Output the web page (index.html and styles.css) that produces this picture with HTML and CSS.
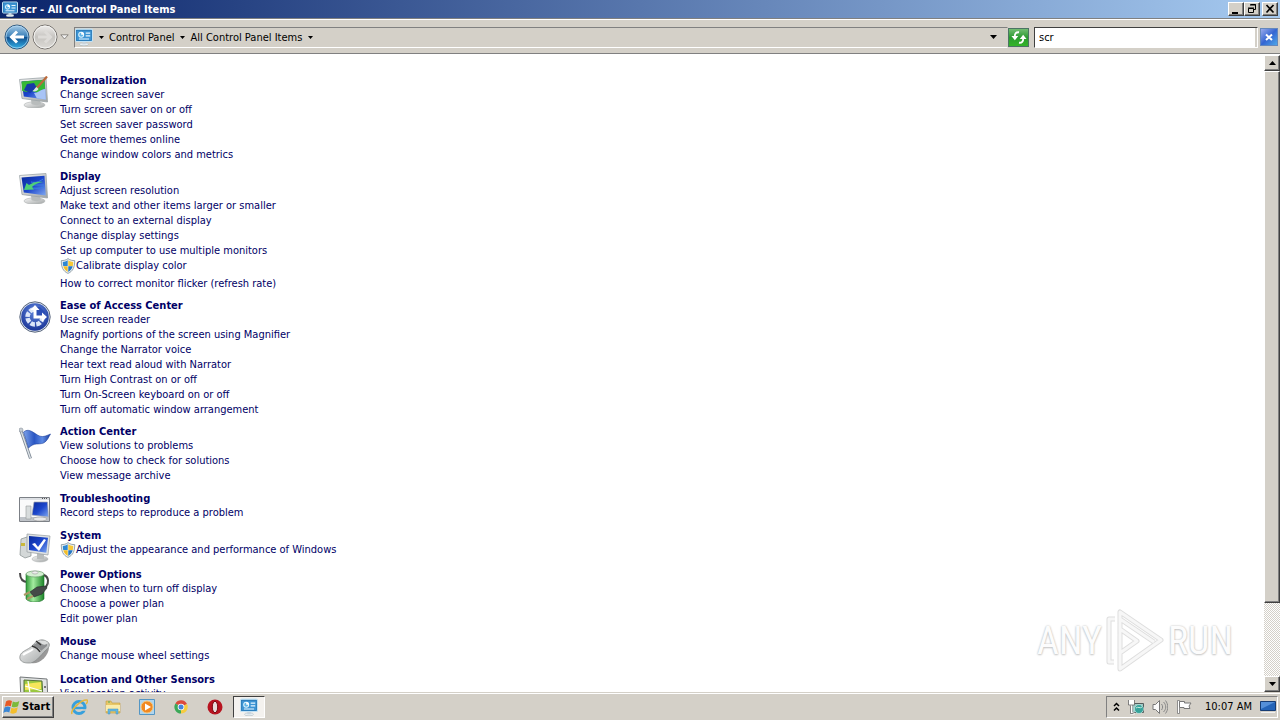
FILE: index.html
```html
<!DOCTYPE html>
<html lang="en">
<head>
<meta charset="utf-8">
<title>scr - All Control Panel Items</title>
<link rel="stylesheet" href="styles.css">
</head>
<body>
<svg class="defs" aria-hidden="true">
  <defs>
    <linearGradient id="blueScreen" x1="0" y1="0" x2="1" y2="1"><stop offset="0" stop-color="#0a2a9a"/><stop offset=".5" stop-color="#1c46cc"/><stop offset="1" stop-color="#7fa8f0"/></linearGradient>
    <linearGradient id="silver" x1="0" y1="0" x2="1" y2="1"><stop offset="0" stop-color="#f6f6f6"/><stop offset="1" stop-color="#a0a4a4"/></linearGradient>
    <linearGradient id="flagBlue" x1="0" y1="0" x2="1" y2="0"><stop offset="0" stop-color="#7ea4ea"/><stop offset=".4" stop-color="#2a56c4"/><stop offset=".7" stop-color="#5c8ae4"/><stop offset="1" stop-color="#1c3c9c"/></linearGradient>
    <linearGradient id="battery" x1="0" y1="0" x2="1" y2="0"><stop offset="0" stop-color="#2f9a38"/><stop offset=".4" stop-color="#a4eca0"/><stop offset="1" stop-color="#1c8428"/></linearGradient>
    <radialGradient id="easeBlue" cx=".5" cy=".3" r=".7"><stop offset="0" stop-color="#5d83dc"/><stop offset="1" stop-color="#1b3698"/></radialGradient>
    <linearGradient id="orbBlue" x1="0" y1="0" x2="0" y2="1"><stop offset="0" stop-color="#a9cde8"/><stop offset=".48" stop-color="#3a7fb8"/><stop offset=".5" stop-color="#0f4c8c"/><stop offset="1" stop-color="#35b4ea"/></linearGradient>
    <linearGradient id="orbGrey" x1="0" y1="0" x2="0" y2="1"><stop offset="0" stop-color="#efeeec"/><stop offset=".5" stop-color="#c6c4c0"/><stop offset="1" stop-color="#dedcd8"/></linearGradient>
    <symbol id="panel" viewBox="0 0 16 16">
      <ellipse cx="8" cy="14.500" rx="4" ry="1.300" fill="#e8f0f4" stroke="#98a8b0" stroke-width=".4"/>
      <path d="M6.500 12h3v2.500h-3z" fill="#c8d4dc"/>
      <rect x=".5" y="1" width="15" height="11" rx="1" fill="#3f9bd8" stroke="#c4e2f4"/>
      <rect x="1.500" y="2" width="13" height="9" fill="#3c94d4" stroke="#226ca8" stroke-width=".5"/>
      <circle cx="5.500" cy="6" r="2.200" fill="#5fb4e6" stroke="#e2f6ff" stroke-width=".9"/><path d="M5.500 6V3.500A2.500 2.500 0 0 1 8 6z" fill="#fff"/>
      <path d="M9.500 4.500h4M9.500 7h4M3.500 9.800h9" stroke="#e6f6ff"/>
    </symbol>
    <symbol id="shield" viewBox="0 0 16 16">
      <path d="M8 .6C6 2.300 3.500 2.600 1.300 2.600c0 6.500 1.500 10.500 6.700 12.800 5.200-2.300 6.700-6.300 6.700-12.800C12.500 2.600 10 2.300 8 .6z" fill="#eef2f4" stroke="#7e8e98" stroke-width=".8"/>
      <path d="M7.700 2.300C6 3.500 4.500 3.800 2.800 3.900c0 1.600.1 2.800.4 4h4.500z" fill="#2f87d2"/><path d="M8.300 2.300v5.600h4.500c.3-1.200.4-2.400.4-4-1.700-.1-3.200-.4-4.900-1.600z" fill="#f6c838"/>
      <path d="M3.300 8.300c.7 2.600 2.100 4.300 4.400 5.600V8.300z" fill="#f2bd28"/><path d="M12.700 8.300H8.300v5.600c2.300-1.300 3.700-3 4.400-5.600z" fill="#2477c4"/>
    </symbol>
    <symbol id="monitor" viewBox="0 0 32 32">
      <ellipse cx="15.500" cy="29" rx="10.500" ry="3.200" fill="url(#silver)" stroke="#b0b4b4" stroke-width=".6"/>
      <path d="M12 23l9 1 1 4c-2 1.500-7 1.500-9.500 0z" fill="#b8bcbc"/>
      <path d="M.5 3.500l26.500-2 1.500 24.500L3 22.500z" fill="url(#silver)" stroke="#9ca4a8" stroke-width=".8"/>
      <path d="M2.500 5.500l23-1.700 1.300 19.700L4.800 20.500z" fill="url(#blueScreen)"/>
    </symbol>
  </defs>
</svg>

<header class="titlebar">
  <svg class="icon16"><use href="#panel"/></svg>
  <h1 class="titlebar-text">scr - All Control Panel Items</h1>
  <div class="caption-buttons">
    <button class="caption" aria-label="Minimize"><svg viewBox="0 0 14 12"><path d="M3 9h6v2H3z"/></svg></button>
    <button class="caption" aria-label="Restore"><svg viewBox="0 0 14 12"><path d="M5.500 1.500h5v5h-2M5 2h6M3.500 5.500h5v4h-5zM3 5h6" fill="none" stroke="#000"/></svg></button>
    <button class="caption close" aria-label="Close"><svg viewBox="0 0 14 12"><path d="M3.500 2l7 7.500M10.500 2l-7 7.500" stroke="#000" stroke-width="1.700"/></svg></button>
  </div>
</header>

<nav class="navbar" aria-label="Location">
  <div class="history">
    <button class="plain" aria-label="Back"><svg class="orb" viewBox="0 0 26 26"><circle cx="13" cy="13" r="12" fill="url(#orbBlue)" stroke="#315a80"/><circle cx="13" cy="13" r="11" fill="none" stroke="#b8dcf4" stroke-opacity=".7"/><path d="M20 13H8M13 7.500L7.500 13l5.500 5.500" fill="none" stroke="#fff" stroke-width="3"/></svg></button>
    <button class="plain" aria-label="Forward"><svg class="orb" viewBox="0 0 26 26"><circle cx="13" cy="13" r="12" fill="url(#orbGrey)" stroke="#77736f"/><circle cx="13" cy="13" r="11" fill="none" stroke="#f4f4f2"/><path d="M6 13h12M13 7.500l5.500 5.500-5.500 5.500" fill="none" stroke="#dddbd8" stroke-width="3"/></svg></button>
    <button class="plain recent" aria-label="Recent pages"><svg viewBox="0 0 9 6"><path d="M.8.800h7.400L4.500 5z" fill="#f2f2f2" stroke="#77736f" stroke-width=".8"/></svg></button>
  </div>
  <div class="address">
    <svg class="icon18"><use href="#panel"/></svg>
    <button class="plain arrow" aria-label="Root"><svg viewBox="0 0 5 3"><path d="M0 0h5L2.500 3z"/></svg></button>
    <button class="plain crumb">Control Panel</button>
    <button class="plain arrow" aria-label="Control Panel items"><svg viewBox="0 0 5 3"><path d="M0 0h5L2.500 3z"/></svg></button>
    <button class="plain crumb">All Control Panel Items</button>
    <button class="plain arrow" aria-label="More items"><svg viewBox="0 0 5 3"><path d="M0 0h5L2.500 3z"/></svg></button>
    <button class="plain arrow history-list" aria-label="Previous locations"><svg viewBox="0 0 7 4"><path d="M0 0h7L3.500 4z"/></svg></button>
  </div>
  <button class="refresh" aria-label="Refresh"><svg viewBox="0 0 18 18"><path d="M9 3.500C6 3 4.500 5 4.500 8M9 14.500c3 .5 4.500-1.500 4.500-4.500" fill="none" stroke="#fff" stroke-width="2"/><path d="M1 7.500h7.200L4.600 12zM9.800 10.500H17L13.400 6z" fill="#fff"/></svg></button>
  <input class="search" type="text" value="scr" aria-label="Search Control Panel">
  <button class="clear" aria-label="Clear search"><svg viewBox="0 0 16 16"><path d="M5 5.500l6 5.500M11 5.500L5 11" stroke="#fff" stroke-width="2"/></svg></button>
</nav>

<div class="view">
  <main class="results">
    <section class="group">
      <svg class="group-icon" viewBox="0 0 32 32"><use href="#monitor"/><path d="M2.500 5.500l23-1.700.6 9c-4 0-5 6-10 3-4-2-7 2-13-1z" fill="#36b936"/><path d="M15 17c4 0 7-4 11.200-4l.6 10.500-9-1.200z" fill="#a8c4f6"/><path d="M8 8l7-1 3 5-7 5-6-3z" fill="#173ba8"/><path d="M28 .5L17 13" stroke="#bb6a3c" stroke-width="2.200"/><path d="M17.500 11l2 2c-1 2-4 3-6 2 2-1 2-3 4-4z" fill="#d9e8dc"/></svg>
      <div class="tasks"><h2><a href="#">Personalization</a></h2><ul>
        <li><a href="#">Change screen saver</a></li><li><a href="#">Turn screen saver on or off</a></li><li><a href="#">Set screen saver password</a></li><li><a href="#">Get more themes online</a></li><li><a href="#">Change window colors and metrics</a></li>
      </ul></div>
    </section>
    <section class="group">
      <svg class="group-icon shifted" viewBox="0 0 32 32"><use href="#monitor"/><path d="M12 10c4 1 8 0 12-3M11 16c5 0 9 1 14-1M14 13h11" stroke="#3c80e4" fill="none"/><path d="M24 10c-5 1-8 2-11 5l2 2.500-10 .5 2.500-7 2.500 2C14 10 19 9 24 10z" fill="#4fcf78"/></svg>
      <div class="tasks"><h2><a href="#">Display</a></h2><ul>
        <li><a href="#">Adjust screen resolution</a></li><li><a href="#">Make text and other items larger or smaller</a></li><li><a href="#">Connect to an external display</a></li><li><a href="#">Change display settings</a></li><li><a href="#">Set up computer to use multiple monitors</a></li><li class="elevated"><svg class="icon16"><use href="#shield"/></svg><a href="#">Calibrate display color</a></li><li><a href="#">How to correct monitor flicker (refresh rate)</a></li>
      </ul></div>
    </section>
    <section class="group">
      <svg class="group-icon" viewBox="0 0 32 32"><circle cx="16" cy="16" r="15.200" fill="#dde5ee" stroke="#58657c"/><circle cx="16" cy="16" r="13.800" fill="url(#easeBlue)"/><circle cx="16" cy="16" r="7.500" fill="none" stroke="#dce6f8" stroke-width="4.500" stroke-dasharray="4.500 1.390"/><path d="M16 16V6h5l5 5v5z" fill="#2c4fb6"/><path d="M14.500 17.500V9h-3L16 4l4.500 5h-3v5.500H23v-3l5 4.500-5 4.500v-3z" fill="#fff"/></svg>
      <div class="tasks"><h2><a href="#">Ease of Access Center</a></h2><ul>
        <li><a href="#">Use screen reader</a></li><li><a href="#">Magnify portions of the screen using Magnifier</a></li><li><a href="#">Change the Narrator voice</a></li><li><a href="#">Hear text read aloud with Narrator</a></li><li><a href="#">Turn High Contrast on or off</a></li><li><a href="#">Turn On-Screen keyboard on or off</a></li><li><a href="#">Turn off automatic window arrangement</a></li>
      </ul></div>
    </section>
    <section class="group">
      <svg class="group-icon" viewBox="0 0 32 32"><path d="M1.500 2.500l10 29" stroke="#7d8894" stroke-width="3"/><path d="M1.500 2.500l10 29" stroke="#dfe4e8" stroke-width="1.300"/><circle cx="2" cy="3" r="2" fill="#c8ced4" stroke="#8a929c" stroke-width=".6"/><path d="M4.500 5c5-4 9 0 14 3s8 1 13-1c-2 3-3 7-7 9-5 2-9-1-15 5z" fill="url(#flagBlue)" stroke="#1f419c" stroke-width=".6"/></svg>
      <div class="tasks"><h2><a href="#">Action Center</a></h2><ul>
        <li><a href="#">View solutions to problems</a></li><li><a href="#">Choose how to check for solutions</a></li><li><a href="#">View message archive</a></li>
      </ul></div>
    </section>
    <section class="group">
      <svg class="group-icon" viewBox="0 0 32 32"><path d="M.5 4.500h30v24H.5z" fill="#fafafa" stroke="#7c8086"/><path d="M1 5h29v2H1z" fill="#dde0e4"/><path d="M23 5.500h6" stroke="#555" stroke-dasharray="1 1"/><path d="M1 24h29v4H1z" fill="#bfc3c8"/><path d="M7 13h5v13H7z" fill="#d8dcdc" stroke="#989c9c" stroke-width=".6"/><ellipse cx="21" cy="26" rx="7" ry="2" fill="#e8e8e8" stroke="#888" stroke-width=".5"/><path d="M15 9h13.500l1 15L13 22z" fill="url(#blueScreen)" stroke="#a4a8b0" stroke-width=".7"/></svg>
      <div class="tasks"><h2><a href="#">Troubleshooting</a></h2><ul><li><a href="#">Record steps to reproduce a problem</a></li></ul></div>
    </section>
    <section class="group">
      <svg class="group-icon" viewBox="0 0 32 32"><path d="M2 8l6-2 4 2v17l-6 2-5-3z" fill="#d4d8d8" stroke="#848c8c" stroke-width=".7"/><path d="M2 12h4v3H2z" fill="#c9b83c"/><ellipse cx="21" cy="28" rx="8" ry="3" fill="url(#silver)" stroke="#a8acac" stroke-width=".5"/><path d="M18 22h7v6h-7z" fill="#b8bcbc"/><path d="M8 3l23 2-2 19-21-3z" fill="#dfe2e2" stroke="#959ca0" stroke-width=".7"/><path d="M10 5l19 1.700-1.700 15L10 19z" fill="url(#blueScreen)"/><path d="M13 13l3-1 3 4 6-8 2 1-7 11z" fill="#fff"/></svg>
      <div class="tasks"><h2><a href="#">System</a></h2><ul><li class="elevated"><svg class="icon16"><use href="#shield"/></svg><a href="#">Adjust the appearance and performance of Windows</a></li></ul></div>
    </section>
    <section class="group">
      <svg class="group-icon" viewBox="0 0 32 32"><path d="M1 3c0 7 3 9 8 9" fill="none" stroke="#484848" stroke-width="2"/><path d="M7 4v25c3 4 15 4 18 0V4z" fill="url(#battery)" stroke="#1c7428" stroke-width=".6"/><ellipse cx="16" cy="4" rx="9" ry="3" fill="#d4efd2" stroke="#6a9c6c" stroke-width=".7"/><ellipse cx="16" cy="2.500" rx="3" ry="1.500" fill="#eee" stroke="#888" stroke-width=".5"/><path d="M25 5c5 2 5 8 2 12l-6 4" fill="none" stroke="#484848" stroke-width="2"/><path d="M27 16l-9 1-7 5 4 5 8-3 5-6z" fill="#444a48" stroke="#242828" stroke-width=".6"/><path d="M11 22l-6 3M14 26l-6 3" stroke="#ad9866" stroke-width="2"/></svg>
      <div class="tasks"><h2><a href="#">Power Options</a></h2><ul>
        <li><a href="#">Choose when to turn off display</a></li><li><a href="#">Choose a power plan</a></li><li><a href="#">Edit power plan</a></li>
      </ul></div>
    </section>
    <section class="group">
      <svg class="group-icon" viewBox="0 0 32 32"><path d="M12 27c8 2 18-7 18-16l-8 7z" fill="#555" opacity=".6"/><path d="M1 20c1-5 8-6 12-10 4-5 9-8 14-5 5 2 4 6 0 9-6 6-11 14-18 13-6 0-9-3-8-7z" fill="url(#silver)" stroke="#808484" stroke-width=".7"/><path d="M14 9c2 3 6 2 8 6l6-5c1-4-2-5-5-6" fill="#8c8e90"/><path d="M13 10c3 1 6 2 8 6M17 5l5 4" stroke="#333" stroke-width="1.500" fill="none"/><path d="M19 5c3-1 8-1 10 2-2 2-4 2-6 1z" fill="#dcdede"/><path d="M4 19c3-3 7-3 10-6" stroke="#fff" stroke-width="2" fill="none"/></svg>
      <div class="tasks"><h2><a href="#">Mouse</a></h2><ul><li><a href="#">Change mouse wheel settings</a></li></ul></div>
    </section>
    <section class="group">
      <svg class="group-icon" viewBox="0 0 32 32"><path d="M1 3l27 2 1 24-27-2z" fill="#e2e4e4" stroke="#74787a"/><path d="M5 6l18 1 1 18H5z" fill="#9bc840" stroke="#58703c"/><path d="M6 10l16-2v7L6 16z" fill="#f6e65a"/><path d="M9 7l3 18M6 12l17 5" stroke="#fff" stroke-width="1.300"/><circle cx="26" cy="13" r="1" fill="#555"/></svg>
      <div class="tasks"><h2><a href="#">Location and Other Sensors</a></h2><ul><li><a href="#">View location activity</a></li></ul></div>
    </section>
  </main>
  <div class="scrollbar">
    <button class="scroll-button" aria-label="Scroll up"><svg viewBox="0 0 7 4"><path d="M0 4h7L3.500 0z"/></svg></button>
    <div class="track"><div class="thumb"></div></div>
    <button class="scroll-button" aria-label="Scroll down"><svg viewBox="0 0 7 4"><path d="M0 0h7L3.500 4z"/></svg></button>
  </div>
  <div class="watermark"><span>ANY</span>
    <svg viewBox="0 0 58 64"><g fill="none" stroke-linejoin="round"><path d="M9 10H3v43h5M14 3v57l41-29zM14 10l34 23M14 20v24l17-12z" stroke="#dedede" stroke-width="5"/><path d="M9 10H3v43h5M14 3v57l41-29zM14 10l34 23M14 20v24l17-12z" stroke="#f7f7f7" stroke-width="3"/></g></svg>
    <span>RUN</span></div>
</div>

<footer class="taskbar">
  <button class="start"><svg viewBox="0 0 18 16"><path d="M3 2.500C5 1 7 1 9 2L7.800 7.300C6 6.300 4 6.500 1.800 7.800z" fill="#e65a26"/><path d="M9.800 2.500c2 1 4 1 6.500-.5L15 7.300c-2 1.300-4 1.300-6.300.4z" fill="#7cba3c"/><path d="M1.500 8.600c2-1.300 4-1.300 6-.4L6.300 13.500c-2-1-4-.8-6 .4z" fill="#3a86d4"/><path d="M8.400 8.700c2 1 4 1 6.400-.4l-1.300 5.300c-2 1.300-4 1.400-6.300.4z" fill="#f4be2c"/></svg>Start</button>
  <div class="pinned">
    <button class="task" aria-label="Internet Explorer"><svg viewBox="0 0 18 18"><circle cx="9" cy="9.500" r="6" fill="none" stroke="#37a0dc" stroke-width="3"/><path d="M4 10h11" stroke="#37a0dc" stroke-width="2.400"/><path d="M10.500 11.300H17v1.500h-6z" fill="#d4d0c8"/><path d="M2 16C0 12 12 1 17 2c1 1 0 3-1 4" fill="none" stroke="#e4b63c" stroke-width="1.500"/></svg></button>
    <button class="task" aria-label="Windows Explorer"><svg viewBox="0 0 18 18"><path d="M2 3h5l1 2h8v10H2z" fill="#e8c768" stroke="#c49c3c" stroke-width=".6"/><path d="M2 7h14v6H2z" fill="#fbecaa"/><path d="M4 16v-5h10v5h-2v-3H6v3z" fill="#65b9e4" stroke="#4090bc" stroke-width=".5"/><path d="M4 4h2" stroke="#4fac5c"/></svg></button>
    <button class="task" aria-label="Media Player"><svg viewBox="0 0 18 18"><path d="M1.500 1.500h15v15h-15z" fill="#b0d5ee" stroke="#5496c4"/><circle cx="9" cy="9" r="6" fill="#f18922" stroke="#fac778"/><path d="M7 5.500l6 3.500-6 3.500z" fill="#fff"/></svg></button>
    <button class="task" aria-label="Chrome"><svg viewBox="0 0 18 18"><path d="M9 9L3.400 5.500A6.600 6.600 0 0 1 15 6z" fill="#dc4a3d"/><path d="M9 9l6-3a6.600 6.600 0 0 1-6 9.600z" fill="#f6cc40"/><path d="M9 9v6.600A6.600 6.600 0 0 1 3.400 5.500z" fill="#3ca858"/><circle cx="9" cy="9" r="3.300" fill="#fff"/><circle cx="9" cy="9" r="2.500" fill="#4584dc"/></svg></button>
    <button class="task" aria-label="Opera"><svg viewBox="0 0 18 18"><circle cx="9" cy="9" r="7.500" fill="#b81420"/><ellipse cx="9" cy="9" rx="2.700" ry="5.700" fill="#e8dedb" stroke="#780c14"/></svg></button>
    <button class="task active" aria-label="Control Panel"><svg><use href="#panel"/></svg></button>
  </div>
  <div class="tray">
    <button class="plain chevrons" aria-label="Show hidden icons"><svg viewBox="0 0 7 10"><path d="M1 4l2.500-2.500L6 4M1 8.500L3.500 6 6 8.500" fill="none" stroke="#000" stroke-width="1.500"/></svg></button>
    <svg class="icon16" viewBox="0 0 16 16"><path d="M4.500 4.500h11v9h-11z" fill="#9bc8c4" stroke="#545c5c"/><circle cx="11" cy="10" r="4.500" fill="#35a39a" stroke="#e0f0ec" stroke-width=".6"/><path d="M8 9c2-2 4 1 6-1" stroke="#cceae0" fill="none"/><path d="M1.500 1v4h4V1M3.500 1v4M3.500 6v8.500h3" fill="none" stroke="#fff" stroke-width="2"/><path d="M.5 1v5h6V1M2.500 6.500v8h3" fill="none" stroke="#555" stroke-width=".7"/></svg>
    <svg class="icon16" viewBox="0 0 16 16"><path d="M1 5.500h2.500L7.500 1.500v13l-4-4H1z" fill="#fafafa" stroke="#777"/><path d="M9.500 5c1.500 2 1.500 4 0 6M11.500 3c3 3 3 7 0 10M13.500 1.500c3 4 3 9 0 13" fill="none" stroke="#888"/></svg>
    <svg class="icon16" viewBox="0 0 16 16"><path d="M1.500 1.500h2v13h-2z" fill="#fff" stroke="#777" stroke-width=".8"/><path d="M3.500 2.500h5v1.500H15l-2 3 1 2.500H8V8.500H3.500z" fill="#fff" stroke="#777"/></svg>
    <time class="clock">10:07 AM</time>
    <button class="plain desktop" aria-label="Show desktop"><svg viewBox="0 0 16 14"><path d="M.5 1.500h15v9H.5z" fill="#2464b8" stroke="#163c74"/><path d="M1 2h14L1 9z" fill="#548fd8"/><path d="M1 12.500h14" stroke="#f0f0f0"/></svg></button>
  </div>
</footer>
</body>
</html>
```
FILE: styles.css
```css
* { box-sizing: border-box; }
body {
  margin: 0;
  height: 100vh;
  display: flex;
  flex-direction: column;
  overflow: hidden;
  background: #d4d0c8;
  color: #000;
  font: 11px/15px Tahoma, "DejaVu Sans Condensed", "DejaVu Sans", sans-serif;
}
h1, h2, ul { margin: 0; padding: 0; font-size: inherit; list-style: none; }
button { font: inherit; color: inherit; margin: 0; padding: 0; }
svg { display: block; flex: none; }
.defs { position: absolute; width: 0; height: 0; }
.icon16 { width: 16px; height: 16px; }
.icon18 { width: 18px; height: 18px; }
.plain { border: 0; background: none; }

.titlebar {
  display: flex;
  align-items: center;
  gap: 2px;
  height: 18px;
  padding: 0 2px;
  color: #fff;
  background: linear-gradient(90deg, #0a246a, #a6caf0);
}
.titlebar-text { flex: 1; font-weight: bold; }
.caption-buttons { display: flex; }
.caption, .scroll-button, .start, .thumb {
  border: 1px solid;
  border-color: #fff #404040 #404040 #fff;
  background: #d4d0c8;
  box-shadow: inset -1px -1px #808080;
}
.caption { width: 16px; height: 14px; }
.caption svg { width: 14px; height: 12px; }
.caption.close { margin-left: 2px; }

.navbar {
  display: flex;
  align-items: center;
  height: 36px;
  padding: 2px 2px 0 4px;
  border-top: 1px solid #808080;
  border-bottom: 1px solid #808080;
  box-shadow: inset 0 1px #fff;
}
.history { display: flex; align-items: center; gap: 2px; padding-right: 5px; }
.orb { width: 26px; height: 26px; }
.recent svg { width: 9px; height: 6px; }
.address {
  flex: 1;
  display: flex;
  align-items: center;
  height: 21px;
  border: 1px solid;
  border-color: #808080 #d4d0c8 #fff #808080;
}
.arrow { width: 16px; height: 18px; display: grid; place-items: center; }
.arrow svg { width: 5px; height: 3px; }
.history-list { margin-left: auto; margin-right: 6px; }
.history-list svg { width: 7px; height: 4px; }
.refresh {
  width: 21px;
  height: 19px;
  border: 1px solid #4b7464;
  background: linear-gradient(#72bc72, #2b9b30 50%, #34b528);
}
.refresh svg { width: 18px; height: 17px; margin: auto; }
.search {
  width: 224px;
  height: 21px;
  margin: 0 2px 0 5px;
  padding: 0 4px;
  border: 1px solid;
  border-color: #404040 #fff #fff #404040;
  box-shadow: inset -2px 0 #d4d0c8;
  border-radius: 0;
  background: #fff;
  font: inherit;
}
.clear {
  width: 18px;
  height: 18px;
  border: 1px solid #6487bc;
  background: linear-gradient(135deg, #9aabec, #3566d2 50%, #4ca6e8);
}
.clear svg { width: 16px; height: 16px; }

.view {
  flex: 1;
  min-height: 0;
  display: flex;
  position: relative;
  border-top: 1px solid #fff;
  background: #fff;
}
.results {
  flex: 1;
  overflow: hidden;
  display: flex;
  flex-direction: column;
  gap: 7px;
  padding: 18px 19px 0;
}
.group { flex: none; display: flex; align-items: flex-start; gap: 9px; }
.group-icon { width: 32px; height: 32px; margin: 3px 0 -4px; }
.tasks { align-self: center; }
.tasks h2 { height: 14px; line-height: 16px; }
.tasks a { color: #000066; text-decoration: none; }
.tasks li { height: 15px; white-space: nowrap; }
.tasks .elevated { height: 18px; display: flex; }

.scrollbar { width: 16px; display: flex; flex-direction: column; }
.scroll-button { height: 16px; display: grid; place-items: center; }
.scroll-button svg { width: 7px; height: 4px; }
.track { flex: 1; background: repeating-conic-gradient(#d4d0c8 0 25%, #fff 0 50%) 0 0 / 2px 2px; }
.thumb { height: 88%; }

.watermark {
  position: absolute;
  right: 47px;
  bottom: 19px;
  display: flex;
  align-items: center;
  gap: 4px;
  color: #fcfcfc;
  font: 38px/64px "Roboto Condensed", "Liberation Sans Narrow", sans-serif;
  text-shadow: 0 0 2px #bbb, 0 1px 2px #ccc;
}
.watermark svg { width: 58px; height: 64px; }

.taskbar {
  height: 28px;
  display: flex;
  align-items: center;
  padding: 0 2px;
  border-top: 1px solid #d4d0c8;
  box-shadow: inset 0 1px #fff;
}
.start {
  display: flex;
  align-items: center;
  gap: 1px;
  height: 22px;
  padding: 0 3px 0 0;
  font-weight: bold;
}
.start svg { width: 18px; height: 16px; }
.pinned { display: flex; gap: 2px; margin-left: 9px; }
.task {
  width: 32px;
  height: 22px;
  display: grid;
  place-items: center;
  border: 1px solid transparent;
  background: none;
}
.task svg { width: 18px; height: 18px; }
.task.active {
  border-color: #404040 #fff #fff #404040;
  background: #f4f2ef;
}
.tray {
  margin-left: auto;
  display: flex;
  align-items: center;
  gap: 8px;
  height: 22px;
  padding: 0 1px 0 6px;
  border: 1px solid;
  border-color: #808080 #fff #fff #808080;
}
.chevrons svg { width: 7px; height: 10px; }
.clock { margin-left: 5px; }
.desktop svg { width: 16px; height: 14px; }
```
